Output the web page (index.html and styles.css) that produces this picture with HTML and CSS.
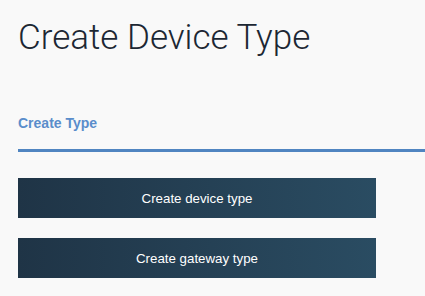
FILE: index.html
```html
<!DOCTYPE html>
<html lang="en">
<head>
  <meta charset="UTF-8" />
  <title>Create Device Type</title>
  <link rel="stylesheet" href="styles.css">
</head>
<body>
  <div class="page">
    <h1>Create Device Type</h1>

    <div class="tabs">
      <div class="tab active">Create Type</div>
    </div>

    <div class="actions">
      <button class="action-button">Create device type</button>
      <button class="action-button">Create gateway type</button>
    </div>
  </div>
</body>
</html>
```

FILE: styles.css
```css
:root {
  --background: #f9f9f9;
  --heading: #1c2733;
  --tab-blue: #5a8dcb;
  --line-blue: #5085c1;
  --button-start: #1f3446;
  --button-end: #2a4c62;
}

* {
  box-sizing: border-box;
  margin: 0;
  padding: 0;
}

body {
  background: var(--background);
  font-family: 'Liberation Sans', Arial, sans-serif;
  overflow: hidden;
}

.page {
  padding: 18px 0 0 18px;
}

h1 {
  font-family: Roboto, 'Liberation Sans', sans-serif;
  font-size: 35px;
  font-weight: 300;
  color: var(--heading);
  line-height: 40px;
}

.tabs {
  margin-top: 57px;
  border-bottom: 3px solid var(--line-blue);
}

.tab {
  font-size: 14px;
  font-weight: 700;
  color: var(--tab-blue);
  line-height: 16px;
  padding-bottom: 18px;
}

.actions {
  display: flex;
  flex-direction: column;
  gap: 20px;
  margin-top: 26px;
}

.action-button {
  width: 358px;
  height: 40px;
  border: none;
  background: linear-gradient(90deg, var(--button-start), var(--button-end));
  color: #fff;
  font-family: 'Liberation Sans', Arial, sans-serif;
  font-size: 13.3px;
  cursor: pointer;
}
```
